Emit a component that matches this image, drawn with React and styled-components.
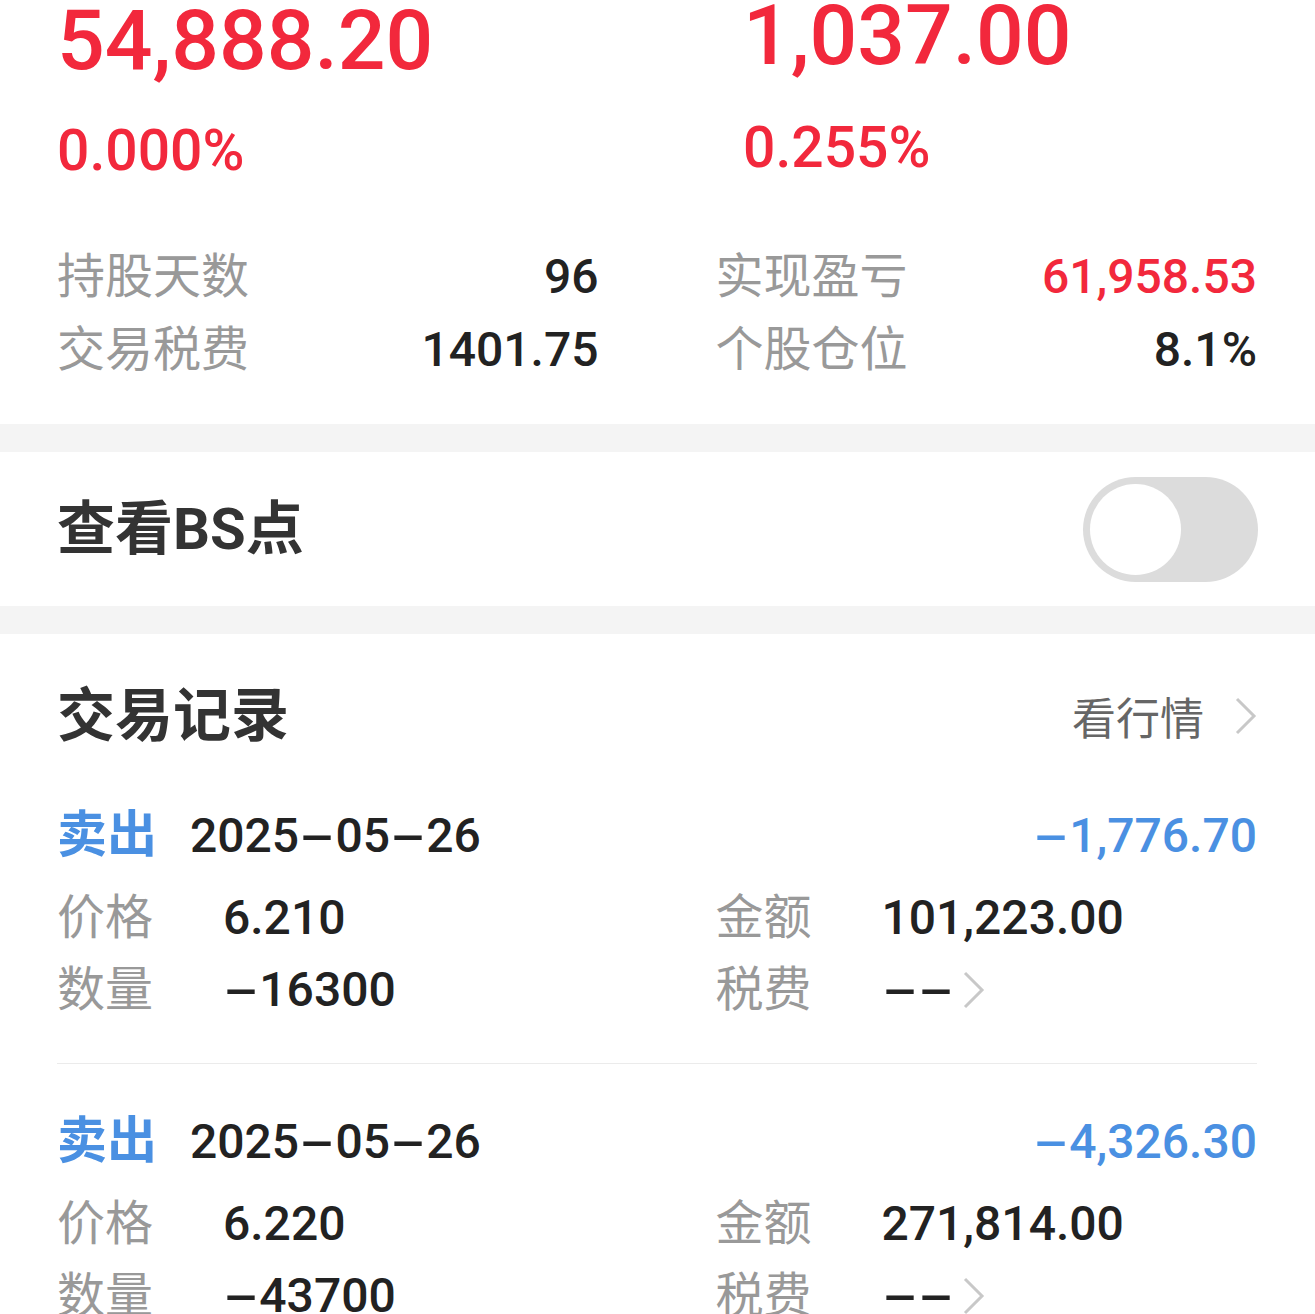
import { Fragment } from "react";
import styled, { createGlobalStyle } from "styled-components";

const red = "#f2283c";
const blue = "#4a90e2";
const dark = "#222222";
const gray = "#999999";

const GlobalStyle = createGlobalStyle`
  body {
    margin: 0;
    background: #ffffff;
    font-family: Roboto, "Noto Sans CJK SC", sans-serif;
    color: ${dark};
  }
`;

const stats = [
  { label: "持股天数", value: "96" },
  { label: "实现盈亏", value: "61,958.53", red: true },
  { label: "交易税费", value: "1401.75" },
  { label: "个股仓位", value: "8.1%" },
];

const trades = [
  { side: "卖出", date: "2025-05-26", pnl: "-1,776.70", price: "6.210", amount: "101,223.00", qty: "-16300" },
  { side: "卖出", date: "2025-05-26", pnl: "-4,326.30", price: "6.220", amount: "271,814.00", qty: "-43700" },
];

// hyphens in DIN style are much wider than Roboto's
function Num({ children }) {
  return String(children)
    .split("-")
    .map((part, i) => (
      <Fragment key={i}>
        {i > 0 && <Dash>-</Dash>}
        {part}
      </Fragment>
    ));
}

function Chevron() {
  return (
    <ChevronSvg viewBox="0 0 23 38" width="23" height="38">
      <polyline points="3,2 20,19 3,36" fill="none" stroke="#c8c8c8" strokeWidth="3" />
    </ChevronSvg>
  );
}

export default function App() {
  return (
    <>
      <GlobalStyle />
      <Page>
        <Summary>
          <TopGrid>
            <TopCol>
              <BigValue $shift={-1}>54,888.20</BigValue>
              <Percent $gap={39}>0.000%</Percent>
            </TopCol>
            <TopCol>
              <BigValue $shift={-6}>1,037.00</BigValue>
              <Percent $gap={41}>0.255%</Percent>
            </TopCol>
          </TopGrid>
          <StatGrid>
            {stats.map((s) => (
              <Stat key={s.label}>
                <Label>{s.label}</Label>
                <StatValue $red={s.red}>{s.value}</StatValue>
              </Stat>
            ))}
          </StatGrid>
        </Summary>

        <Band />

        <ToggleRow>
          <Title>查看BS点</Title>
          <Switch>
            <Knob />
          </Switch>
        </ToggleRow>

        <Band />

        <Records>
          <RecordsHeader>
            <Title>交易记录</Title>
            <MoreLink>
              看行情
              <Chevron />
            </MoreLink>
          </RecordsHeader>
          {trades.map((t, i) => (
            <Record key={i}>
              <RecordHead>
                <Side>{t.side}</Side>
                <DateText>
                  <Num>{t.date}</Num>
                </DateText>
                <Pnl>
                  <Num>{t.pnl}</Num>
                </Pnl>
              </RecordHead>
              <DetailGrid>
                <Detail>
                  <Label>价格</Label>
                  <DetailValue>{t.price}</DetailValue>
                </Detail>
                <Detail>
                  <Label>金额</Label>
                  <DetailValue>{t.amount}</DetailValue>
                </Detail>
                <Detail>
                  <Label>数量</Label>
                  <DetailValue>
                    <Num>{t.qty}</Num>
                  </DetailValue>
                </Detail>
                <Detail>
                  <Label>税费</Label>
                  <DetailValue>
                    <Num>--</Num>
                    <TaxChevron>
                      <Chevron />
                    </TaxChevron>
                  </DetailValue>
                </Detail>
              </DetailGrid>
            </Record>
          ))}
        </Records>
      </Page>
    </>
  );
}

const Page = styled.div`
  width: 1315px;
  overflow: hidden;
`;

const Summary = styled.section`
  padding: 0 58px 38px 57px;
`;

const TopGrid = styled.div`
  display: grid;
  grid-template-columns: 686px 1fr;
  align-items: start;
`;

const TopCol = styled.div`
  display: flex;
  flex-direction: column;
`;

const BigValue = styled.div`
  margin-top: ${(p) => p.$shift}px;
  font-size: 84px;
  line-height: 84px;
  font-weight: 500;
  color: ${red};
`;

const Percent = styled.div`
  margin-top: ${(p) => p.$gap}px;
  font-size: 57px;
  line-height: 57px;
  font-weight: 500;
  color: ${red};
`;

const StatGrid = styled.div`
  margin-top: 61px;
  display: grid;
  grid-template-columns: 1fr 1fr;
  column-gap: 117px;
`;

const Stat = styled.div`
  display: flex;
  justify-content: space-between;
  font-size: 48px;
  line-height: 73px;
`;

const Label = styled.span`
  color: ${gray};
  font-size: 48px;
  font-weight: 400;
`;

const StatValue = styled.span`
  font-weight: 500;
  color: ${(p) => (p.$red ? red : dark)};
`;

const Band = styled.div`
  height: 28px;
  background: #f4f4f4;
`;

const ToggleRow = styled.section`
  height: 154px;
  padding: 0 57px 0 57px;
  display: flex;
  align-items: center;
  justify-content: space-between;
`;

const Title = styled.h2`
  margin: 0;
  font-size: 58px;
  line-height: 68px;
  font-weight: 700;
  color: #333333;
`;

const Switch = styled.div`
  width: 175px;
  height: 105px;
  box-sizing: border-box;
  padding: 7px;
  border-radius: 53px;
  background: #dcdcdc;
  display: flex;
  align-items: center;
`;

const Knob = styled.div`
  width: 91px;
  height: 91px;
  border-radius: 50%;
  background: #ffffff;
`;

const Records = styled.section`
  padding: 0 58px 0 57px;
`;

const RecordsHeader = styled.div`
  padding: 48px 0 8px;
  display: flex;
  align-items: center;
  justify-content: space-between;
`;

const MoreLink = styled.div`
  display: flex;
  align-items: center;
  gap: 30px;
  font-size: 44px;
  color: #666666;
`;

const ChevronSvg = styled.svg`
  display: block;
  flex-shrink: 0;
`;

const Record = styled.div`
  padding: 42px 0 37px;
  border-bottom: 1px solid #ebebeb;
`;

const RecordHead = styled.div`
  display: flex;
  align-items: baseline;
  height: 70px;
  line-height: 70px;
  margin-bottom: 12px;
`;

const Side = styled.span`
  font-size: 50px;
  font-weight: 700;
  color: ${blue};
`;

const DateText = styled.span`
  margin-left: 33px;
  font-size: 48px;
  font-weight: 500;
  color: ${dark};
`;

const Pnl = styled.span`
  margin-left: auto;
  font-size: 48px;
  font-weight: 500;
  color: ${blue};
`;

const Dash = styled.span`
  display: inline-block;
  margin: 0 10px;
  transform: scaleX(2.2);
`;

const DetailGrid = styled.div`
  display: grid;
  grid-template-columns: 1fr 1fr;
  column-gap: 117px;
`;

const Detail = styled.div`
  display: grid;
  grid-template-columns: 166px 1fr;
  align-items: baseline;
  line-height: 72px;
`;

const DetailValue = styled.span`
  display: flex;
  align-items: center;
  font-size: 48px;
  font-weight: 500;
  color: ${dark};
`;

const TaxChevron = styled.span`
  margin-left: 8px;
`;
